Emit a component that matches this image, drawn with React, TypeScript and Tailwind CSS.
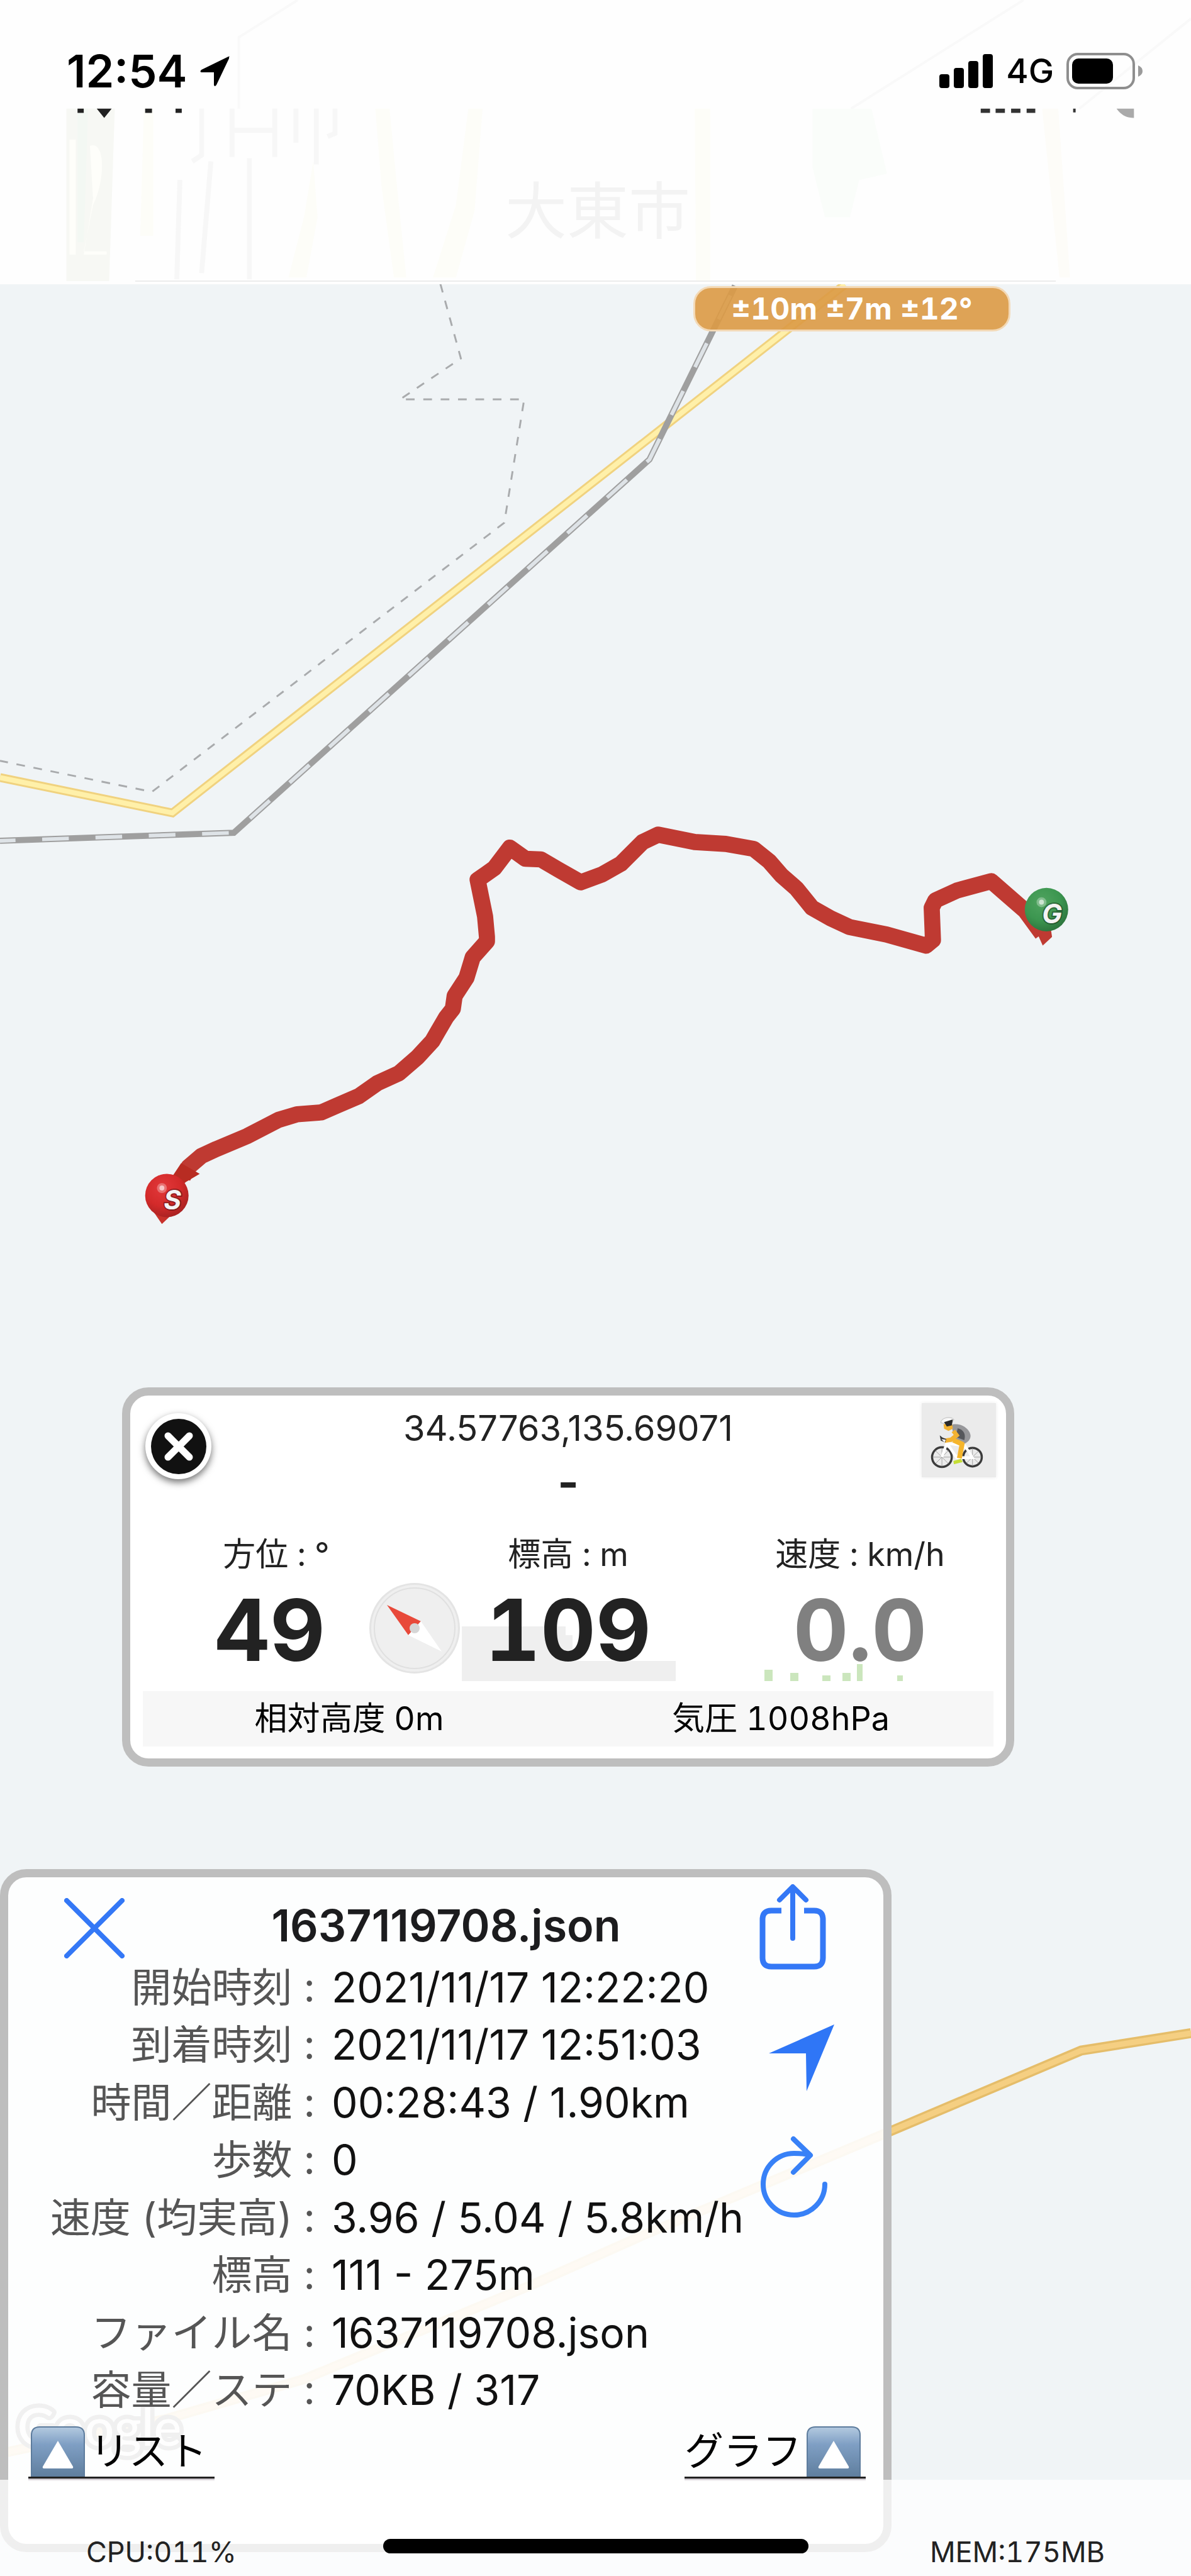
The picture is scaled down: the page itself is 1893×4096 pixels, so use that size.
import React from 'react'

const route =
	'295,1898 304,1882 325,1864 349,1853 399,1832 449,1806 479,1797 518,1794 543,1783 578,1768 608,1747 643,1731 673,1705 697,1679 705,1665 719,1641 730,1627 733,1606 752,1577 762,1544 785,1518 785,1511 782,1478 770,1419 797,1400 822,1367 847,1385 872,1386 901,1403 936,1423 971,1410 1001,1393 1036,1358 1061,1346 1120,1358 1170,1361 1215,1369 1240,1389 1260,1412 1284,1433 1309,1464 1339,1481 1369,1495 1429,1507 1493,1525 1504,1516 1502,1464 1508,1452 1543,1436 1598,1421 1623,1443 1653,1469 1680,1506'

const railway = '0,1356 377,1343 1047,741 1185,461'
const localRoad = '0,1254 278,1311 1362,459'
const highway = '0,3957 269,3901 490,3837 857,3685 1041,3603 1438,3436 1743,3307 1920,3279'
const boundary = '710,458 743,578 645,644 845,644 813,843 245,1277 0,1227'

const details = [
	{ label: '開始時刻', value: '2021/11/17 12:22:20' },
	{ label: '到着時刻', value: '2021/11/17 12:51:03' },
	{ label: '時間／距離', value: '00:28:43 / 1.90km' },
	{ label: '歩数', value: '0' },
	{ label: '速度 (均実高)', value: '3.96 / 5.04 / 5.8km/h' },
	{ label: '標高', value: '111 - 275m' },
	{ label: 'ファイル名', value: '1637119708.json' },
	{ label: '容量／ステ', value: '70KB / 317' },
]

function Pin({ x, y, letter, fill }: { x: number; y: number; letter: string; fill: string }) {
	return (
		<g>
			<circle cx={x} cy={y} r="35" fill={fill} />
			<circle cx={x - 8} cy={y - 12} r="8" fill="#fff" opacity="0.3" />
			<circle cx={x - 8} cy={y - 12} r="4" fill="#fff" opacity="0.6" />
			<text
				x={x + 9}
				y={y + 22}
				textAnchor="middle"
				fontSize="43"
				fontWeight="700"
				fontStyle="italic"
				fill="#f4f4f4"
				stroke="#00000055"
				strokeWidth="4"
				paintOrder="stroke"
			>
				{letter}
			</text>
		</g>
	)
}

function MapCanvas() {
	return (
		<svg
			className="absolute inset-0 w-full h-full"
			viewBox="0 0 1920 4155"
			preserveAspectRatio="xMidYMin slice"
			fill="none"
			aria-hidden="true"
		>
			<defs>
				<radialGradient id="pin-red" cx="0.4" cy="0.32" r="0.7">
					<stop offset="0" stopColor="#e2383a" />
					<stop offset="0.6" stopColor="#d32a2a" />
					<stop offset="1" stopColor="#a92222" />
				</radialGradient>
				<radialGradient id="pin-green" cx="0.4" cy="0.32" r="0.7">
					<stop offset="0" stopColor="#4fa35f" />
					<stop offset="0.6" stopColor="#3c9650" />
					<stop offset="1" stopColor="#2d753d" />
				</radialGradient>
			</defs>

			{/* Roads and borders */}
			<polyline points={boundary} stroke="#a9abad" strokeWidth="3" strokeDasharray="14 14" />
			<polyline points={localRoad} stroke="#f0d27f" strokeWidth="14" />
			<polyline points={localRoad} stroke="#fff0a9" strokeWidth="8" />
			<polyline points={railway} stroke="#9f9f9f" strokeWidth="10" />
			<polyline points={railway} stroke="#dee3e7" strokeWidth="6" strokeDasharray="43 43" strokeDashoffset="18" />
			<polyline points={highway} stroke="#e5bd6a" strokeWidth="16" />
			<polyline points={highway} stroke="#f5cf82" strokeWidth="9" />

			{/* Watermark */}
			<text
				x="28"
				y="3944"
				fontSize="84"
				fontWeight="500"
				fill="#fff"
				stroke="#555"
				strokeWidth="14"
				strokeLinejoin="round"
				paintOrder="stroke"
				fontFamily="Lato, sans-serif"
			>
				Google
			</text>

			{/* Track */}
			<polyline points={route} stroke="#bf3a32" strokeWidth="26" strokeLinejoin="round" />
			<path d="M278 1897 292 1876 322 1893 300 1906 288 1916Z" fill="#b82c22" />
			<path d="M248 1955H281L261 1974Z" fill="#c8312b" />
			<path d="M1668 1496 1694 1498 1696 1511 1681 1525Z" fill="#bf3a32" />
			<Pin x={269} y={1928} letter="S" fill="url(#pin-red)" />
			<Pin x={1687} y={1467} letter="G" fill="url(#pin-green)" />
		</svg>
	)
}

function HeaderGhost() {
	return (
		<svg
			className="absolute inset-0 w-full h-full"
			viewBox="0 0 1920 458"
			preserveAspectRatio="none"
			aria-hidden="true"
		>
			<path d="M1650 0 1372 175M1920 30 1740 175M480 0 385 60V175" stroke="#f9f9f9" strokeWidth="4" fill="none" />
			<path d="M107 175H185L176 453H107Z" fill="#f7f8f4" />
			<path d="M112 225H122V410H112ZM145 235C170 225 170 290 150 330L135 405H172V410H135L150 320Z" fill="#fefefa" />
			<path d="M125 175H142L135 390H125Z" fill="#f3f8f3" />
			<path d="M232 175H247V380H226ZM505 260 490 350 465 447H494L512 350ZM605 175H628L640 300 655 447H635L615 300ZM755 175H778L765 340 735 447H698L735 330ZM1120 175H1145V453H1122Z" fill="#fdfdf8" />
			<path d="M1310 175H1405L1430 280 1385 290 1370 350H1330L1310 270Z" fill="#fafdfa" />
			<path d="M1680 175H1706L1725 447H1708Z" fill="#fdfcf8" />
			<path
				d="M325 175V250L310 260M374 175V253M443 175V253M376 210H440M477 175V230M510 175V265M540 175V215L528 220M402 255V450M290 290 285 450M340 260 325 440"
				stroke="#f7f7f7"
				strokeWidth="8"
				fill="none"
			/>
			<path d="M218 453H1702" stroke="#ececec" strokeWidth="2" />
			<path d="M125 175H135V182H125ZM156 175H180L168 190ZM234 175H245V182H234ZM283 175H293V182H283Z" fill="#222" />
			<path d="M1581 175H1596V182H1581ZM1605 175H1620V182H1605ZM1630 175H1645V182H1630ZM1655 175H1669V182H1655ZM1730 175H1734V181H1730Z" fill="#333" />
			<path d="M1800 175H1828V190C1815 190 1806 184 1800 175Z" fill="#aaa" />
		</svg>
	)
}

function StatusBar() {
	return (
		<header className="relative h-[452px] bg-[#fefefe]">
			<HeaderGhost />
			<div className="relative flex items-center justify-between h-24 mt-[65px] pl-[106px] pr-[77px] text-black">
				<div className="flex items-center gap-5">
					<time className="text-[72px] leading-[96px] font-semibold">12:54</time>
					<svg className="w-12 h-12" viewBox="0 0 48 48" aria-label="Location in use">
						<path d="M46 2Q48 0 45 1L2 22Q-1 25 2 26L22 26V46Q23 50 26 46L46 4Z" />
					</svg>
				</div>
				<div className="flex items-center gap-5">
					<svg className="w-[86px] h-[54px]" viewBox="0 0 86 54" aria-label="Signal">
						<rect x="0" y="32" width="16" height="22" rx="4" />
						<rect x="23" y="22" width="16" height="32" rx="4" />
						<rect x="46" y="11" width="16" height="43" rx="4" />
						<rect x="69" y="0" width="16" height="54" rx="4" />
					</svg>
					<span className="text-[54px] leading-[96px] font-medium">4G</span>
					<svg className="w-[121px] h-[58px]" viewBox="0 0 121 58" aria-label="Battery">
						<rect x="2" y="2" width="105" height="54" rx="16" fill="none" stroke="#8e8e8e" strokeWidth="4" />
						<rect x="9" y="9" width="65" height="40" rx="10" />
						<path d="M114 20Q121 23 121 29T114 38Z" fill="#9a9a9a" />
					</svg>
				</div>
			</div>
			{/* stretched map label showing through */}
			<p className="relative mt-[105px] pl-[803px] text-[98px] leading-[140px] text-[#f3f3f3]">大東市</p>
		</header>
	)
}

function Cyclist() {
	return (
		<svg className="w-[118px] h-[118px]" viewBox="0 0 136 136" fill="none" aria-hidden="true">
			<g stroke="#3b3b3b" strokeWidth="4">
				<circle cx="37" cy="99" r="18" />
				<circle cx="93" cy="99" r="17" />
			</g>
			<g stroke="#999" strokeWidth="1">
				<path d="M37 82V116M20 99H54M25 87 49 111M49 87 25 111M93 83V115M77 99H109M82 88 104 110M104 88 82 110" />
			</g>
			<path d="M37 99 46 73 64 100H93L79 78 48 74M64 100 80 76" stroke="#fff" strokeWidth="5" />
			<path d="M54 40C66 35 85 43 89 57C91 64 86 71 79 74L62 68 57 52Z" fill="#97979a" />
			<path d="M66 46C77 49 81 57 78 68L62 62Z" fill="#56575b" />
			<path d="M40 39 55 35 57 47 49 51 41 47Z" fill="#f2b233" />
			<path d="M35 36C35 27 52 23 59 30L55 37 39 37Z" fill="#f7f7f7" stroke="#b5b5b5" />
			<path d="M41 35 57 30 55 41 46 43Z" fill="#292929" />
			<path d="M58 51 64 59 54 67 42 69" stroke="#f2b233" strokeWidth="8" />
			<path d="M58 68 74 75 69 101" stroke="#f5b52c" strokeWidth="9" strokeLinejoin="round" />
			<path d="M33 59 38 63 45 66 43 72 35 69Z" fill="#3a3a3a" />
			<path d="M36 66 44 67 42 72Z" fill="#fff" />
			<path d="M58 106 72 102 75 108 59 112Z" fill="#c5de35" />
		</svg>
	)
}

function Compass() {
	return (
		<svg className="absolute left-[380px] top-2.5 w-36 h-36" viewBox="0 0 144 144" aria-label="Compass">
			<circle cx="72" cy="72" r="72" fill="#e4e4e4" />
			<circle cx="72" cy="72" r="69" fill="#efefef" />
			<circle cx="72" cy="72" r="64" fill="#efefef" stroke="#e0e0e0" strokeWidth="2" />
			<path d="M28 35 82 61 62 83Z" fill="#e8493a" />
			<path d="M115 109 82 61 62 83Z" fill="#fff" />
			<circle cx="72" cy="72" r="8" fill="#d6d6d6" />
		</svg>
	)
}

function LocationCard() {
	return (
		<section className="relative ml-[194px] mr-[281px] border-[13px] border-[#bebebe] rounded-[42px] bg-white text-[#222]">
			<div className="grid grid-cols-[1fr_auto_1fr] items-start pt-3 pl-6 pr-4">
				<button
					type="button"
					aria-label="Close"
					className="mt-4 flex items-center justify-center w-[105px] h-[105px] rounded-full bg-white shadow-[0_5px_12px_rgba(0,0,0,0.55)]"
				>
					<svg className="w-[88px] h-[88px]" viewBox="0 0 88 88" fill="none">
						<circle cx="44" cy="44" r="44" fill="#111" />
						<path d="M27 27 61 61M61 27 27 61" stroke="#fff" strokeWidth="11" strokeLinecap="round" />
					</svg>
				</button>
				<div className="pr-2 text-center">
					<p className="text-[56px] leading-[80px]">34.57763,135.69071</p>
					<p className="text-[72px] leading-[92px] font-bold">-</p>
				</div>
				<button type="button" aria-label="Cycling" className="justify-self-end bg-[#ebebeb] shadow-[0_0_6px_#ebebeb]">
					<Cyclist />
				</button>
			</div>

			{/* Readings */}
			<div className="mt-[34px] grid grid-cols-3 text-center tabular-nums">
				<div>
					<h3 className="text-[52px] leading-[70px]">方位 : °</h3>
					<div className="relative pr-5">
						<Compass />
						<p className="text-[136px] leading-[170px] font-bold">49</p>
					</div>
				</div>
				<div>
					<h3 className="text-[52px] leading-[70px]">標高 : m</h3>
					<div className="relative">
						<svg className="absolute left-[63px] bottom-1 w-[340px] h-[87px]" viewBox="0 0 340 87" aria-hidden="true">
							<path d="M0 0H165V14H176V55H340V87H0Z" fill="#efefef" />
						</svg>
						<p className="relative text-[136px] leading-[170px] font-bold">109</p>
					</div>
				</div>
				<div>
					<h3 className="text-[52px] leading-[70px]">速度 : km/h</h3>
					<div className="relative">
						<svg className="absolute left-20 bottom-1 w-[224px] h-[27px]" viewBox="0 0 224 27" aria-hidden="true">
							<path
								d="M0 9H13V27H0ZM41 14H54V27H41ZM92 18H105V27H92ZM124 14H137V27H124ZM147 0H156V27H147ZM211 18H220V27H211Z"
								fill="#cbe6bd"
							/>
						</svg>
						<p className="relative text-[136px] leading-[170px] font-bold text-[#808080]">0.0</p>
					</div>
				</div>
			</div>

			<div className="mt-3 mx-5 mb-[19px] grid grid-cols-2 bg-[#f7f7f7] text-center text-[52px] leading-[88px] text-black tabular-nums">
				<p className="pr-5">相対高度 0m</p>
				<p>気圧 1008hPa</p>
			</div>
		</section>
	)
}

function UpBadge() {
	return (
		<svg className="w-[86px] h-[80px]" viewBox="0 0 86 80" aria-hidden="true">
			<defs>
				<linearGradient id="up-badge" x1="0" y1="0" x2="0" y2="1">
					<stop offset="0" stopColor="#b4cae0" />
					<stop offset="0.35" stopColor="#7f9fc4" />
					<stop offset="1" stopColor="#5f7e9e" />
				</linearGradient>
			</defs>
			<path d="M14 1H72Q85 1 85 14V80H1V14Q1 1 14 1Z" fill="url(#up-badge)" stroke="#5d7c9d" strokeWidth="2" />
			<path d="M43 23 67 64Q68 67 65 67H21Q18 67 19 64Z" fill="#fff" />
		</svg>
	)
}

function TrackCard() {
	return (
		<section className="relative mr-[476px] border-[13px] border-[#bebebe] rounded-[42px] bg-[#fefefe]/92 bg-clip-padding">
			<div className="flex">
				<div className="flex-1">
					<div className="flex items-center h-[129px] pl-[89px] pt-6">
						<button type="button" aria-label="Close track" className="mt-2">
							<svg className="w-24 h-24" viewBox="0 0 96 96" fill="none">
								<path d="M4 4 92 92M92 4 4 92" stroke="#3478f6" strokeWidth="8" strokeLinecap="round" />
							</svg>
						</button>
						<h2 className="flex-1 pl-5 text-center text-[70px] leading-[90px] font-semibold text-[#1c1c1e]">
							1637119708.json
						</h2>
					</div>
					<dl className="h-[732px] grid grid-cols-[488px_1fr] auto-rows-fr items-center gap-x-[26px] text-[66px] leading-[90px] whitespace-nowrap">
						{details.map((row) => (
							<React.Fragment key={row.label}>
								<dt className="text-right text-[64px] text-[#555]">{row.label} :</dt>
								<dd className="text-[#111]">{row.value}</dd>
							</React.Fragment>
						))}
					</dl>
				</div>

				{/* Actions */}
				<div className="flex flex-col items-start w-[204px] pt-[11px]">
					<button type="button" aria-label="Share">
						<svg className="w-[140px] h-[136px]" viewBox="0 0 140 136" fill="none">
							<path
								d="M42 42H26Q12 42 12 56V117Q12 131 26 131H94Q108 131 108 117V56Q108 42 94 42H78"
								stroke="#3478f6"
								strokeWidth="9"
							/>
							<path
								d="M60 86V6M39 25 60 4 81 25"
								stroke="#3478f6"
								strokeWidth="8"
								strokeLinecap="round"
								strokeLinejoin="round"
							/>
						</svg>
					</button>
					<button type="button" aria-label="Navigate" className="mt-[87px]">
						<svg className="w-[140px] h-[106px]" viewBox="0 0 140 106">
							<path d="M126 0 82 106 81 46H22Z" fill="#2f76f6" />
						</svg>
					</button>
					<button type="button" aria-label="Reload" className="mt-[71px]">
						<svg className="w-[140px] h-[132px]" viewBox="0 0 140 132" fill="none">
							<path
								d="M61 5 88 31 61 58M86 31C81 28 71 28 62 28A49 49 0 1 0 111 77"
								stroke="#3881f7"
								strokeWidth="8"
								strokeLinecap="round"
								strokeLinejoin="round"
							/>
						</svg>
					</button>
				</div>
			</div>

			<nav className="flex justify-between pt-3 pb-[104px] pl-8 pr-7 text-[62px] leading-[80px] text-black">
				<a href="#list" className="flex items-center pl-1 pr-3 border-b-3 border-[#222] shadow-[0_4px_0_#c9c4ca]">
					<UpBadge />
					<span className="pl-2">リスト</span>
				</a>
				<a href="#graph" className="flex items-center pr-2 border-b-3 border-[#222] shadow-[0_4px_0_#c9c4ca]">
					<span className="pr-2">グラフ</span>
					<UpBadge />
				</a>
			</nav>
		</section>
	)
}

export default function App() {
	return (
		<div className="relative flex flex-col min-h-screen bg-[#f0f4f6] overflow-hidden font-[Inter,'Noto_Sans_CJK_JP',sans-serif]">
			<MapCanvas />
			<StatusBar />

			<main className="relative flex-1 flex flex-col pb-[38px]">
				<p className="mt-[3px] ml-[1102px] w-[504px] border-3 border-[#f3d9b6] rounded-[28px] bg-[#dc9a45]/90 text-center text-[48px] leading-[66px] font-bold text-white tabular-nums">
					±10m ±7m ±12°
				</p>
				<div className="mt-auto">
					<LocationCard />
				</div>
				<div className="mt-[163px]">
					<TrackCard />
				</div>
			</main>

			<footer className="absolute inset-x-0 bottom-0 h-[153px] bg-white/75 flex items-end justify-between pl-[137px] pr-[137px] pb-[11px] text-[45px] leading-[54px] text-[#222] tabular-nums">
				<span>CPU:011%</span>
				<span>MEM:175MB</span>
				<div className="absolute left-1/2 bottom-9 w-[676px] h-[23px] -translate-x-1/2 rounded-full bg-black" />
			</footer>
		</div>
	)
}
